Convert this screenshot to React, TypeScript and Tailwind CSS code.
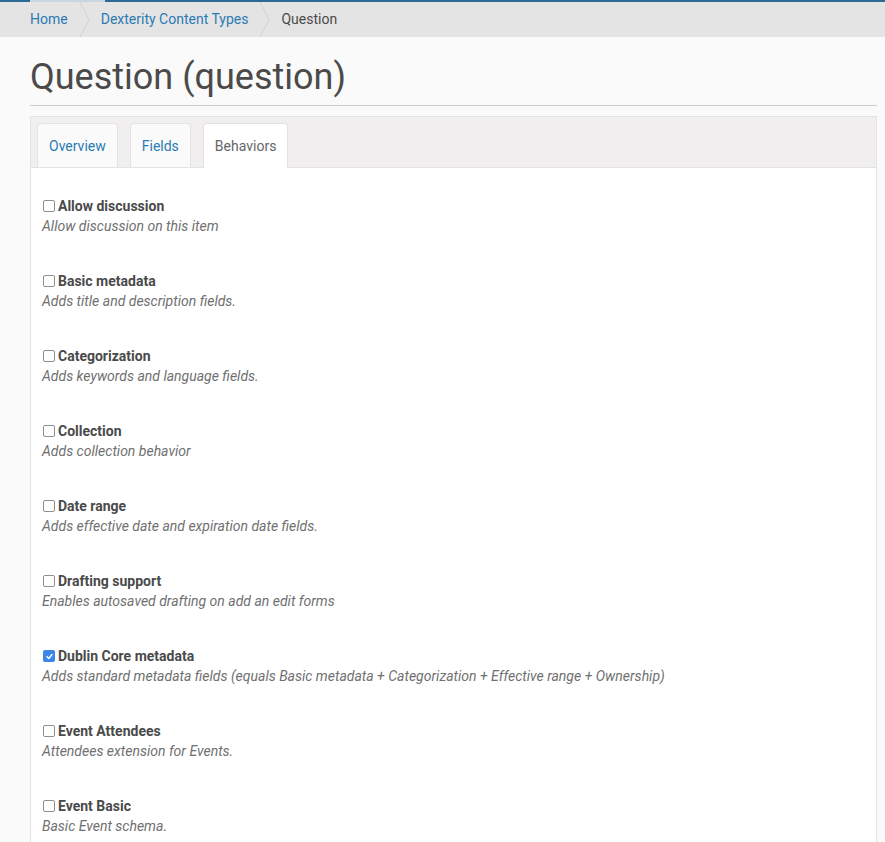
import React from 'react';

const behaviors = [
    { title: 'Allow discussion', desc: 'Allow discussion on this item', checked: false },
    { title: 'Basic metadata', desc: 'Adds title and description fields.', checked: false },
    { title: 'Categorization', desc: 'Adds keywords and language fields.', checked: false },
    { title: 'Collection', desc: 'Adds collection behavior', checked: false },
    { title: 'Date range', desc: 'Adds effective date and expiration date fields.', checked: false },
    { title: 'Drafting support', desc: 'Enables autosaved drafting on add an edit forms', checked: false },
    { title: 'Dublin Core metadata', desc: 'Adds standard metadata fields (equals Basic metadata + Categorization + Effective range + Ownership)', checked: true },
    { title: 'Event Attendees', desc: 'Attendees extension for Events.', checked: false },
    { title: 'Event Basic', desc: 'Basic Event schema.', checked: false },
];

function Chevron() {
    return (
        <svg width="12" height="35" viewBox="0 0 12 35" className="ml-[11px] mr-[10px] shrink-0">
            <path d="M1 0 L10 17.5 L1 35" fill="none" stroke="#d2d2d2" strokeWidth="1" />
        </svg>
    );
}

function Box({ checked }: { checked: boolean }) {
    if (checked) {
        return (
            <span className="w-[12px] h-[12px] rounded-[2px] bg-[#3b86e6] flex items-center justify-center mr-[3px]">
                <svg width="9" height="9" viewBox="0 0 10 10">
                    <path d="M2.2 5.2 L4.2 7.2 L7.8 2.8" fill="none" stroke="#fff" strokeWidth="1.6" strokeLinecap="round" strokeLinejoin="round" />
                </svg>
            </span>
        );
    }
    return <span className="w-[12px] h-[12px] rounded-[2px] border border-[#8f8f8f] bg-white mr-[3px]" />;
}

export default function App() {
    return (
        <div className="min-h-[842px] bg-[#fafafa] text-[#4a4a4a]" style={{ fontFamily: 'Roboto, "Liberation Sans", sans-serif' }}>
            <div className="h-[2px] flex">
                <div className="w-[30px] bg-[#2d6a96]" />
                <div className="w-[75px] bg-[#c9d6df]" />
                <div className="flex-1 bg-[#2d6a96]" />
            </div>
            <div className="h-[35px] bg-[#e5e4e4] flex items-center pl-[30px] text-[14px]">
                <span className="text-[#2b7bb3]">Home</span>
                <Chevron />
                <span className="text-[#2b7bb3]">Dexterity Content Types</span>
                <Chevron />
                <span className="text-[#4a4a4a]">Question</span>
            </div>
            <div className="pl-[30px] pr-[8px]">
                <h1 className="text-[36px] leading-[44px] pt-[18px] pb-[6px] border-b border-[#cccccc] text-[#4a4a4a] font-normal">
                    Question (question)
                </h1>
                <div className="mt-[10px] border border-[#e3e3e3] bg-white">
                    <div className="bg-[#f0eeee] border-b border-[#e3e3e3] flex gap-[12px] px-[6px] pt-[6px] h-[51px]">
                        <div className="px-[11px] pt-[1px] flex items-center bg-[#fafafa] border border-b-0 border-[#e3e3e3] rounded-t-[4px] text-[14px] text-[#2b7bb3]">Overview</div>
                        <div className="px-[11px] pt-[1px] flex items-center bg-[#fafafa] border border-b-0 border-[#e3e3e3] rounded-t-[4px] text-[14px] text-[#2b7bb3]">Fields</div>
                        <div className="px-[11px] pt-[1px] flex items-center bg-white border border-b-0 border-[#e3e3e3] rounded-t-[4px] text-[14px] text-[#666666] h-[45px] mb-[-1px] relative">Behaviors</div>
                    </div>
                    <div className="pt-[28px] pl-[11px] pb-[10px]">
                        {behaviors.map((b) => (
                            <div key={b.title} className="mb-[35px]">
                                <div className="flex items-center h-[20px] pl-[1px]">
                                    <Box checked={b.checked} />
                                    <span className="text-[14px] font-bold text-[#4a4a4a]">{b.title}</span>
                                </div>
                                <div className="text-[14px] leading-[20px] italic text-[#707070]">{b.desc}</div>
                            </div>
                        ))}
                    </div>
                </div>
            </div>
        </div>
    );
}
